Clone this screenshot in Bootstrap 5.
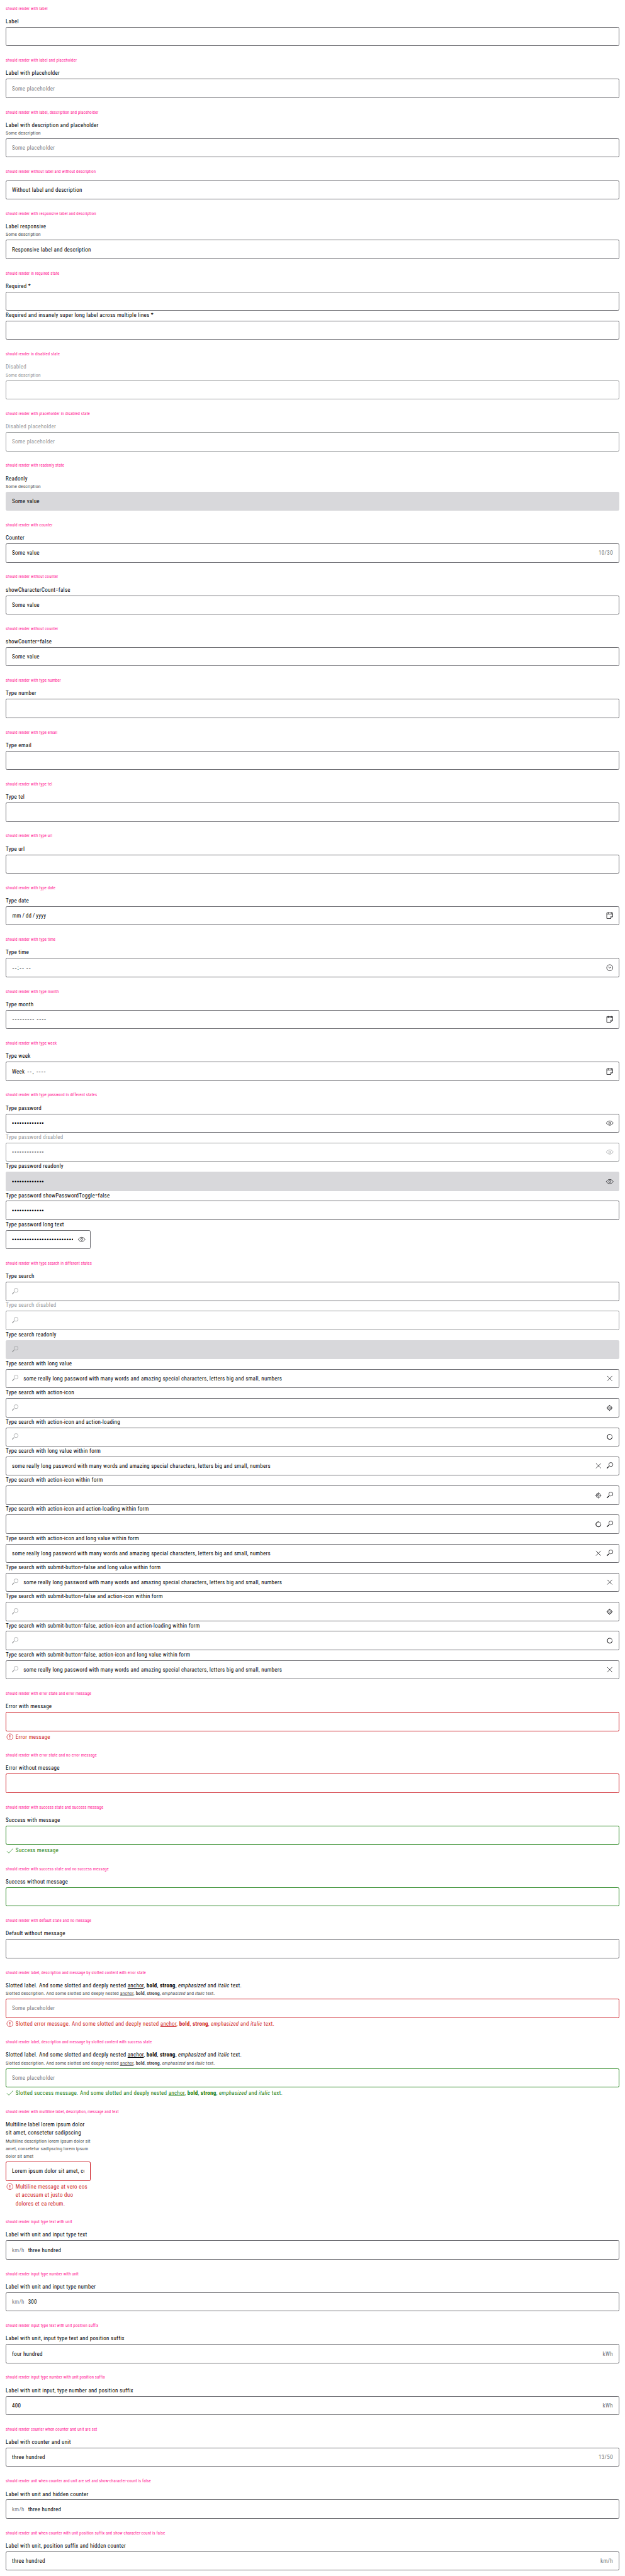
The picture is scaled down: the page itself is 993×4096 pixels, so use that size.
<!DOCTYPE html>
<html lang="en">
<head>
<meta charset="utf-8">
<meta name="viewport" content="width=device-width, initial-scale=1">
<title>Text field wrapper states</title>
<link href="https://cdn.jsdelivr.net/npm/bootstrap@5.3.0/dist/css/bootstrap.min.css" rel="stylesheet">
<script src="https://cdn.jsdelivr.net/npm/bootstrap@5.3.0/dist/js/bootstrap.bundle.min.js"></script>
<style>
  /* 1rem is 16 design pixels at the page's scale; the small px terms undo sub-pixel truncation */
  html { font-size: 9.02727px; }
  body { font-family: "Roboto Condensed", Roboto, "Liberation Sans", sans-serif; font-size: 1rem; line-height: 1.5; letter-spacing: .03em; color: #010205; background: #fff; overflow-x: hidden; }
  section { padding: 1rem; }
  h2 { font-size: .75rem; font-weight: 400; line-height: 1rem; letter-spacing: .019em; color: #ff1493; margin: 0; padding: .08rem 0 calc(.92rem + .045px); }
  .lbl { display: block; line-height: 1.5rem; padding-top: .1rem; margin-bottom: -.1rem; }
  .desc { font-size: .875rem; line-height: 1.359rem; letter-spacing: .01em; color: #535457; margin: 0; padding-top: .06rem; margin-bottom: -.06rem; }
  .lbl a, .desc a, .msg a { color: inherit; }
  .box { display: flex; align-items: center; height: calc(3.375rem + .02px); margin-top: .25rem; padding: 0 1rem; border: 1px solid #6b6b70; border-radius: .25rem; white-space: nowrap; overflow: hidden; }
  .lbl-none { margin-top: 0; }
  .box .val { flex: 1 1 0; min-width: 0; overflow: hidden; }
  .box .val, .box .unit, .box .count { padding-top: .2rem; }
  .ph, .unit { color: #7c7c7f; }
  .unit { margin-right: .66rem; }
  .count { color: #6b6b70; letter-spacing: .04em; }
  .date { word-spacing: -.07em; text-indent: .06em; }
  .off, .off .desc, .off .ph { color: #96989a; }
  .off .box { border-color: #96989a; }
  .ro .box { background: #d8d8db; border-color: #d8d8db; }
  .err .box { border-color: #cc1922; }
  .err .msg { color: #cc1922; }
  .ok .box { border-color: #197e10; }
  .ok .msg { color: #197e10; }
  .msg { display: flex; gap: .25rem; margin-top: .25rem; line-height: 1.5rem; }
  .msg span { padding-top: .1rem; margin-bottom: -.1rem; }
  .ic { width: 1.5rem; height: 1.5rem; flex: none; fill: none; stroke: #010205; stroke-width: 1.3; }
  .msg .ic { stroke: currentColor; }
  .off .ic { stroke: #96989a; }
  .has-ic { padding-right: .8rem; }
  .has-lead { padding-left: .82rem; }
  .lead-ic { stroke: #96989a; margin-right: .7rem; }
  .act { display: flex; gap: .5rem; }
  .dots { font-family: "Liberation Sans", sans-serif; letter-spacing: .087em; }
  .dots-long { margin-right: .72rem; }
  .dash { font-family: "Liberation Sans", sans-serif; letter-spacing: .107em; text-indent: .06em; word-spacing: -.06em; }
  .week .dash { margin-left: .18em; }
  .narrow { width: 15rem; }
</style>
</head>
<body>
<svg class="d-none" aria-hidden="true">
  <symbol id="search" viewBox="0 0 24 24"><circle cx="15.100" cy="8.300" r="5.600"/><path d="M9.600 13.700 4 19.100" stroke-width="2"/></symbol>
  <symbol id="close" viewBox="0 0 24 24"><path d="m5.200 5.200 13.600 13.600m0-13.600L5.200 18.800"/></symbol>
  <symbol id="locate" viewBox="0 0 24 24"><circle cx="11.600" cy="12" r="6"/><circle cx="11.600" cy="12" r="2.600"/><path d="M11.600 3.500V6m0 12v2.500M3.200 12h2.400m12 0H20"/></symbol>
  <symbol id="spin" viewBox="0 0 24 24"><circle cx="12" cy="12" r="7" stroke-opacity=".75"/><path d="M14 5.300A7 7 0 1 0 18.900 13.200" stroke-width="1.300"/></symbol>
  <symbol id="eye" viewBox="0 0 24 24"><path d="M2.300 12C5 8 8.500 6 12 6S19 8 21.700 12C19 16 15.500 18 12 18S5 16 2.300 12Z"/><circle cx="12" cy="12" r="2.700"/></symbol>
  <symbol id="cal" viewBox="0 0 24 24"><path d="M3.600 4.500h16.800v10l-5.400 5.800H3.600ZM3.600 7.800h16.800M7.700 2.500v4.900M16.300 2.500v4.900M20.400 14.500H15v5.800"/></symbol>
  <symbol id="clock" viewBox="0 0 24 24"><circle cx="12" cy="12" r="8.500"/><path d="m8 9.500 4 3.200 4-2.700"/></symbol>
  <symbol id="warn" viewBox="0 0 24 24"><circle cx="12" cy="12" r="8.500"/><path d="M12 7v6.500M12 15v2" stroke-width="2"/></symbol>
  <symbol id="check" viewBox="0 0 24 24"><path d="m3.500 13 5.500 5.500L20.600 6"/></symbol>
</svg>
<main>
<section><h2>should render with label</h2><div class="lbl">Label</div><div class="box"></div></section>
<section><h2>should render with label and placeholder</h2><div class="lbl">Label with placeholder</div><div class="box"><span class="val ph">Some placeholder</span></div></section>
<section><h2>should render with label, description and placeholder</h2><div class="lbl">Label with description and placeholder</div><p class="desc">Some description</p><div class="box"><span class="val ph">Some placeholder</span></div></section>
<section><h2>should render without label and without description</h2><div class="box lbl-none"><span class="val">Without label and description</span></div></section>
<section><h2>should render with responsive label and description</h2><div class="lbl">Label responsive</div><p class="desc">Some description</p><div class="box"><span class="val">Responsive label and description</span></div></section>
<section><h2>should render in required state</h2><div class="lbl">Required *</div><div class="box"></div><div class="lbl">Required and insanely super long label across multiple lines *</div><div class="box"></div></section>
<section><h2>should render in disabled state</h2><div class="off"><div class="lbl">Disabled</div><p class="desc">Some description</p><div class="box"></div></div></section>
<section><h2>should render with placeholder in disabled state</h2><div class="off"><div class="lbl">Disabled placeholder</div><div class="box"><span class="val ph">Some placeholder</span></div></div></section>
<section><h2>should render with readonly state</h2><div class="ro"><div class="lbl">Readonly</div><p class="desc">Some description</p><div class="box"><span class="val">Some value</span></div></div></section>
<section><h2>should render with counter</h2><div class="lbl">Counter</div><div class="box"><span class="val">Some value</span><span class="count">10/30</span></div></section>
<section><h2>should render without counter</h2><div class="lbl">showCharacterCount=false</div><div class="box"><span class="val">Some value</span></div></section>
<section><h2>should render without counter</h2><div class="lbl">showCounter=false</div><div class="box"><span class="val">Some value</span></div></section>
<section><h2>should render with type number</h2><div class="lbl">Type number</div><div class="box"></div></section>
<section><h2>should render with type email</h2><div class="lbl">Type email</div><div class="box"></div></section>
<section><h2>should render with type tel</h2><div class="lbl">Type tel</div><div class="box"></div></section>
<section><h2>should render with type url</h2><div class="lbl">Type url</div><div class="box"></div></section>
<section><h2>should render with type date</h2><div class="lbl">Type date</div><div class="box has-ic"><span class="val date">mm / dd / yyyy</span><svg class="ic"><use href="#cal"/></svg></div></section>
<section><h2>should render with type time</h2><div class="lbl">Type time</div><div class="box has-ic"><span class="val dash">--:-- --</span><svg class="ic"><use href="#clock"/></svg></div></section>
<section><h2>should render with type month</h2><div class="lbl">Type month</div><div class="box has-ic"><span class="val dash">--------- ----</span><svg class="ic"><use href="#cal"/></svg></div></section>
<section><h2>should render with type week</h2><div class="lbl">Type week</div><div class="box has-ic"><span class="val week">Week <span class="dash">--, ----</span></span><svg class="ic"><use href="#cal"/></svg></div></section>
<section><h2>should render with type password in different states</h2>
  <div class="lbl">Type password</div><div class="box has-ic"><span class="val dots">•••••••••••••</span><svg class="ic"><use href="#eye"/></svg></div>
  <div class="off"><div class="lbl">Type password disabled</div><div class="box has-ic"><span class="val dots">•••••••••••••</span><svg class="ic"><use href="#eye"/></svg></div></div>
  <div class="ro"><div class="lbl">Type password readonly</div><div class="box has-ic"><span class="val dots">•••••••••••••</span><svg class="ic"><use href="#eye"/></svg></div></div>
  <div class="lbl">Type password showPasswordToggle=false</div><div class="box"><span class="val dots">•••••••••••••</span></div>
  <div class="narrow"><div class="lbl">Type password long text</div><div class="box has-ic"><span class="val dots dots-long">•••••••••••••••••••••••••</span><svg class="ic"><use href="#eye"/></svg></div></div>
</section>
<section><h2>should render with type search in different states</h2>
  <div class="lbl">Type search</div><div class="box has-lead"><svg class="ic lead-ic"><use href="#search"/></svg></div>
  <div class="off"><div class="lbl">Type search disabled</div><div class="box has-lead"><svg class="ic lead-ic"><use href="#search"/></svg></div></div>
  <div class="ro"><div class="lbl">Type search readonly</div><div class="box has-lead"><svg class="ic lead-ic"><use href="#search"/></svg></div></div>
  <div class="lbl">Type search with long value</div><div class="box has-lead has-ic"><svg class="ic lead-ic"><use href="#search"/></svg><span class="val">some really long password with many words and amazing special characters, letters big and small, numbers</span><svg class="ic"><use href="#close"/></svg></div>
  <div class="lbl">Type search with action-icon</div><div class="box has-lead has-ic"><svg class="ic lead-ic"><use href="#search"/></svg><span class="val"></span><svg class="ic"><use href="#locate"/></svg></div>
  <div class="lbl">Type search with action-icon and action-loading</div><div class="box has-lead has-ic"><svg class="ic lead-ic"><use href="#search"/></svg><span class="val"></span><svg class="ic"><use href="#spin"/></svg></div>
  <div class="lbl">Type search with long value within form</div><div class="box has-ic"><span class="val">some really long password with many words and amazing special characters, letters big and small, numbers</span><span class="act"><svg class="ic"><use href="#close"/></svg><svg class="ic"><use href="#search"/></svg></span></div>
  <div class="lbl">Type search with action-icon within form</div><div class="box has-ic"><span class="val"></span><span class="act"><svg class="ic"><use href="#locate"/></svg><svg class="ic"><use href="#search"/></svg></span></div>
  <div class="lbl">Type search with action-icon and action-loading within form</div><div class="box has-ic"><span class="val"></span><span class="act"><svg class="ic"><use href="#spin"/></svg><svg class="ic"><use href="#search"/></svg></span></div>
  <div class="lbl">Type search with action-icon and long value within form</div><div class="box has-ic"><span class="val">some really long password with many words and amazing special characters, letters big and small, numbers</span><span class="act"><svg class="ic"><use href="#close"/></svg><svg class="ic"><use href="#search"/></svg></span></div>
  <div class="lbl">Type search with submit-button=false and long value within form</div><div class="box has-lead has-ic"><svg class="ic lead-ic"><use href="#search"/></svg><span class="val">some really long password with many words and amazing special characters, letters big and small, numbers</span><svg class="ic"><use href="#close"/></svg></div>
  <div class="lbl">Type search with submit-button=false and action-icon within form</div><div class="box has-lead has-ic"><svg class="ic lead-ic"><use href="#search"/></svg><span class="val"></span><svg class="ic"><use href="#locate"/></svg></div>
  <div class="lbl">Type search with submit-button=false, action-icon and action-loading within form</div><div class="box has-lead has-ic"><svg class="ic lead-ic"><use href="#search"/></svg><span class="val"></span><svg class="ic"><use href="#spin"/></svg></div>
  <div class="lbl">Type search with submit-button=false, action-icon and long value within form</div><div class="box has-lead has-ic"><svg class="ic lead-ic"><use href="#search"/></svg><span class="val">some really long password with many words and amazing special characters, letters big and small, numbers</span><svg class="ic"><use href="#close"/></svg></div>
</section>
<section class="err"><h2>should render with error state and error message</h2><div class="lbl">Error with message</div><div class="box"></div><div class="msg"><svg class="ic"><use href="#warn"/></svg><span>Error message</span></div></section>
<section class="err"><h2>should render with error state and no error message</h2><div class="lbl">Error without message</div><div class="box"></div></section>
<section class="ok"><h2>should render with success state and success message</h2><div class="lbl">Success with message</div><div class="box"></div><div class="msg"><svg class="ic"><use href="#check"/></svg><span>Success message</span></div></section>
<section class="ok"><h2>should render with success state and no success message</h2><div class="lbl">Success without message</div><div class="box"></div></section>
<section><h2>should render with default state and no message</h2><div class="lbl">Default without message</div><div class="box"></div></section>
<section class="err"><h2>should render label, description and message by slotted content with error state</h2>
  <div class="lbl">Slotted label. And some slotted and deeply nested <a href="#">anchor</a>, <b>bold</b>, <strong>strong</strong>, <em>emphasized</em> and <i>italic</i> text.</div>
  <p class="desc">Slotted description. And some slotted and deeply nested <a href="#">anchor</a>, <b>bold</b>, <strong>strong</strong>, <em>emphasized</em> and <i>italic</i> text.</p>
  <div class="box"><span class="val ph">Some placeholder</span></div>
  <div class="msg"><svg class="ic"><use href="#warn"/></svg><span>Slotted error message. And some slotted and deeply nested <a href="#">anchor</a>, <b>bold</b>, <strong>strong</strong>, <em>emphasized</em> and <i>italic</i> text.</span></div>
</section>
<section class="ok"><h2>should render label, description and message by slotted content with success state</h2>
  <div class="lbl">Slotted label. And some slotted and deeply nested <a href="#">anchor</a>, <b>bold</b>, <strong>strong</strong>, <em>emphasized</em> and <i>italic</i> text.</div>
  <p class="desc">Slotted description. And some slotted and deeply nested <a href="#">anchor</a>, <b>bold</b>, <strong>strong</strong>, <em>emphasized</em> and <i>italic</i> text.</p>
  <div class="box"><span class="val ph">Some placeholder</span></div>
  <div class="msg"><svg class="ic"><use href="#check"/></svg><span>Slotted success message. And some slotted and deeply nested <a href="#">anchor</a>, <b>bold</b>, <strong>strong</strong>, <em>emphasized</em> and <i>italic</i> text.</span></div>
</section>
<section class="err"><h2>should render with multiline label, description, message and text</h2>
  <div class="narrow">
    <div class="lbl">Multiline label lorem ipsum dolor<br>sit amet, consetetur sadipscing</div>
    <p class="desc text-nowrap">Multiline description lorem ipsum dolor sit<br>amet, consetetur sadipscing lorem ipsum<br>dolor sit amet</p>
    <div class="box"><span class="val">Lorem ipsum dolor sit amet, co</span></div>
    <div class="msg"><svg class="ic"><use href="#warn"/></svg><span>Multiline message at vero eos<br>et accusam et justo duo<br>dolores et ea rebum.</span></div>
  </div>
</section>
<section><h2>should render input type text with unit</h2><div class="lbl">Label with unit and input type text</div><div class="box"><span class="unit">km/h</span><span class="val">three hundred</span></div></section>
<section><h2>should render input type number with unit</h2><div class="lbl">Label with unit and input type number</div><div class="box"><span class="unit">km/h</span><span class="val">300</span></div></section>
<section><h2>should render input type text with unit position suffix</h2><div class="lbl">Label with unit, input type text and position suffix</div><div class="box"><span class="val">four hundred</span><span class="count">kWh</span></div></section>
<section><h2>should render input type number with unit position suffix</h2><div class="lbl">Label with unit input, type number and position suffix</div><div class="box"><span class="val">400</span><span class="count">kWh</span></div></section>
<section><h2>should render counter when counter and unit are set</h2><div class="lbl">Label with counter and unit</div><div class="box"><span class="val">three hundred</span><span class="count">13/50</span></div></section>
<section><h2>should render unit when counter and unit are set and show-character-count is false</h2><div class="lbl">Label with unit and hidden counter</div><div class="box"><span class="unit">km/h</span><span class="val">three hundred</span></div></section>
<section><h2>should render unit when counter with unit position suffix and show-character-count is false</h2><div class="lbl">Label with unit, position suffix and hidden counter</div><div class="box"><span class="val">three hundred</span><span class="count">km/h</span></div></section>
</main>
</body>
</html>
